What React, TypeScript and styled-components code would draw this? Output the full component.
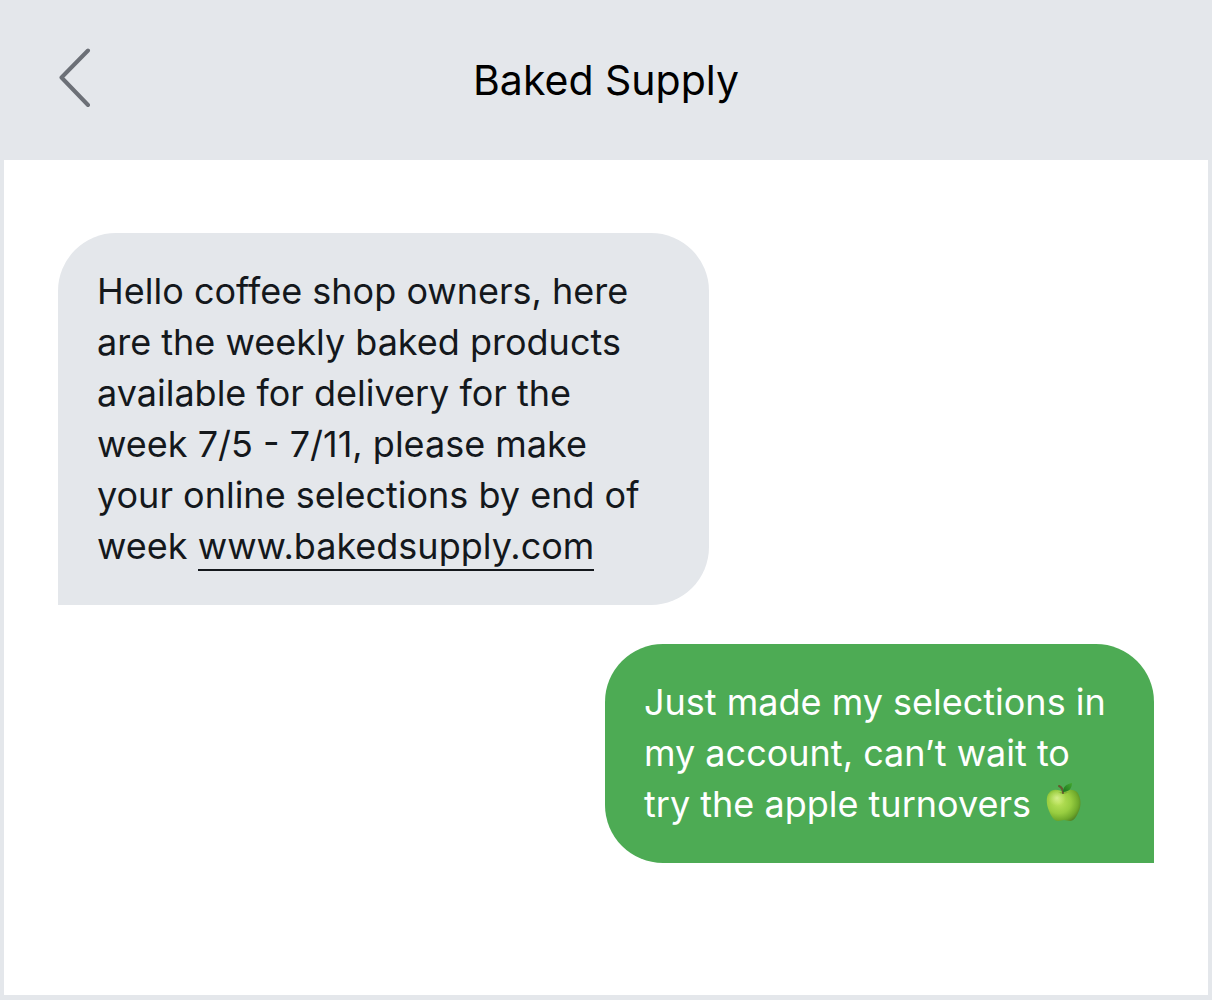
import React from "react";
import styled, { createGlobalStyle } from "styled-components";

const GlobalStyle = createGlobalStyle`
  * { box-sizing: border-box; }
  body { margin: 0; font-family: Inter, "Liberation Sans", sans-serif; }
`;
const Screen = styled.main`
  min-height: 100vh;
  display: flex;
  flex-direction: column;
  background: #fff;
  border: solid #e4e7eb;
  border-width: 0 4px 5px;
`;
const Header = styled.header`
  display: grid;
  grid-template-columns: 1fr auto 1fr;
  align-items: center;
  height: 160px;
  padding: 0 54px;
  background: #e4e7eb;
`;
const BackButton = styled.button`
  justify-self: start;
  display: flex;
  padding: 0;
  border: 0;
  background: none;
  color: #6c7077;
  cursor: pointer;
`;
const Title = styled.h1`
  margin: 0;
  font-size: 41px;
  line-height: 52px;
  font-weight: 400;
  color: #000;
`;
const Thread = styled.section`
  flex: 1;
  display: flex;
  flex-direction: column;
  gap: 39px;
  padding: 73px 54px;
`;
const Bubble = styled.p<{ $sent?: boolean }>`
  margin: 0;
  align-self: ${(p) => (p.$sent ? "flex-end" : "flex-start")};
  width: ${(p) => (p.$sent ? "549px" : "651px")};
  max-width: 100%;
  padding: 33px 39px;
  border-radius: ${(p) => (p.$sent ? "58px 58px 0 58px" : "58px 58px 58px 0")};
  background: ${(p) => (p.$sent ? "#4dab54" : "#e4e7eb")};
  color: ${(p) => (p.$sent ? "#fff" : "#14181c")};
  font-size: 36px;
  line-height: 51px;
`;
const Link = styled.a`
  color: inherit;
  text-decoration: none;
  padding-bottom: 1px;
  border-bottom: 2px solid currentColor;
`;
const Emoji = styled.svg`
  width: 38px;
  height: 40px;
  margin-left: 4px;
  vertical-align: -6px;
`;

function GreenApple() {
  return (
    <Emoji viewBox="0 0 38 40" role="img" aria-label="Green apple">
      <defs>
        <radialGradient id="skin" cx="0.36" cy="0.4" r="0.72">
          <stop offset="0" stopColor="#bce45b" />
          <stop offset="0.5" stopColor="#98cd40" />
          <stop offset="0.8" stopColor="#70aa2b" />
          <stop offset="1" stopColor="#4d7b22" />
        </radialGradient>
        <radialGradient id="shine" cx="0.5" cy="0.5" r="0.5">
          <stop offset="0" stopColor="#e6f7a8" stopOpacity="0.7" />
          <stop offset="1" stopColor="#d5ef83" stopOpacity="0" />
        </radialGradient>
        <linearGradient id="leaf" x1="0" y1="1" x2="1" y2="0">
          <stop offset="0" stopColor="#1a761d" />
          <stop offset="1" stopColor="#43a72f" />
        </linearGradient>
      </defs>
      <path
        d="M18 9C13 6 7 6 4 10C1 13 1 21 4 28C6 33 9 38 13 38C16 38 17 37 19 37C21 37 22 38 25 38C29 38 31 34 33 30C37 23 36 14 32 9C28 6 23 6 18 9Z"
        fill="url(#skin)"
      />
      <ellipse cx="12" cy="15" rx="9" ry="8" fill="url(#shine)" />
      <path d="M13 9Q18 12 24 9Q20 10 18 9Q16 10 13 9Z" fill="#6b9b29" />
      <path d="M18 10C18 6 16 4 14 3" fill="none" stroke="#655a30" strokeWidth="2" strokeLinecap="round" />
      <path d="M18 9C18 4 21 1 27 0C27 5 24 9 18 9Z" fill="url(#leaf)" />
    </Emoji>
  );
}

export default function App() {
  return (
    <Screen>
      <GlobalStyle />
      <Header>
        <BackButton type="button" aria-label="Back">
          <svg width="34" height="64" viewBox="0 0 34 64" fill="none" stroke="currentColor" strokeWidth="4">
            <path d="M30 2.500 3.500 29.500 30 57" strokeLinecap="round" strokeLinejoin="round" />
          </svg>
        </BackButton>
        <Title>Baked Supply</Title>
      </Header>
      <Thread>
        <Bubble>
          Hello coffee shop owners, here<br />are the weekly baked products<br />available for delivery for the<br />
          week 7/5 - 7/11, please make<br />your online selections by end of<br />week{" "}
          <Link href="#">www.bakedsupply.com</Link>
        </Bubble>
        <Bubble $sent>
          Just made my selections in<br />my account, can’t wait to<br />try the apple turnovers <GreenApple />
        </Bubble>
      </Thread>
    </Screen>
  );
}
